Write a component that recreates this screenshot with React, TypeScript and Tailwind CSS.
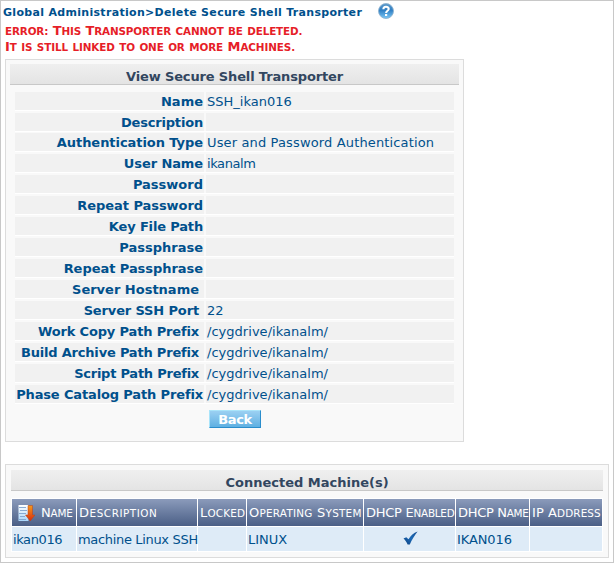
import React from "react";

const fields: [string, string, string, string][] = [
  ["Name", "SSH_ikan016", "pr-px", ""],
  ["Description", "", "pr-px tracking-[-0.18px]", ""],
  ["Authentication Type", "User and Password Authentication", "pr-px tracking-[-0.06px]", "tracking-[0.14px]"],
  ["User Name", "ikanalm", "pr-px tracking-[-0.1px]", "tracking-[-0.4px]"],
  ["Password", "", "pr-px", ""],
  ["Repeat Password", "", "pr-px tracking-[-0.06px]", ""],
  ["Key File Path", "", "pr-px tracking-[-0.16px]", ""],
  ["Passphrase", "", "pr-px", ""],
  ["Repeat Passphrase", "", "pr-px tracking-[-0.05px]", ""],
  ["Server Hostname", "", "pr-[5px]", ""],
  ["Server SSH Port", "22", "pr-[5px] tracking-[-0.14px]", ""],
  ["Work Copy Path Prefix", "/cygdrive/ikanalm/", "pr-[5px] tracking-[-0.16px]", "tracking-[0.03px]"],
  ["Build Archive Path Prefix", "/cygdrive/ikanalm/", "pr-[5px] tracking-[-0.19px]", "tracking-[0.03px]"],
  ["Script Path Prefix", "/cygdrive/ikanalm/", "pr-[5px] tracking-[-0.24px]", "tracking-[0.03px]"],
  ["Phase Catalog Path Prefix", "/cygdrive/ikanalm/", "pr-px tracking-[-0.14px]", "tracking-[0.03px]"],
];

function HelpIcon() {
  return (
    <svg className="mb-0.5 ml-4 size-4" viewBox="0 0 16 16">
      <defs>
        <linearGradient id="help" x1="0" y1="0" x2="0" y2="1">
          <stop offset="0" stopColor="#5f9ccb" />
          <stop offset="0.45" stopColor="#2f7fc4" />
          <stop offset="1" stopColor="#7cc8f6" />
        </linearGradient>
      </defs>
      <circle cx="8" cy="8" r="7.5" fill="url(#help)" stroke="#8fb2cf" strokeWidth="0.9" />
      <path d="M5.4 6.2C5.4 3 10.7 3 10.7 6C10.7 7.8 8.1 7.8 8.1 9.9" fill="none" stroke="#fff" strokeWidth="2.1" />
      <rect x="7" y="11" width="2.2" height="2" fill="#fff" />
    </svg>
  );
}

function SortIcon() {
  return (
    <svg className="h-[18px] w-[17px] shrink-0" viewBox="0 0 17 18">
      <defs>
        <linearGradient id="page" x1="0" y1="0" x2="0" y2="1">
          <stop offset="0" stopColor="#fff" />
          <stop offset="1" stopColor="#a9d6fb" />
        </linearGradient>
        <linearGradient id="arrow" x1="0" y1="0" x2="0" y2="1">
          <stop offset="0" stopColor="#f59a1c" />
          <stop offset="1" stopColor="#d92b0c" />
        </linearGradient>
      </defs>
      <rect x="0.5" y="1" width="10" height="16" fill="url(#page)" />
      <path d="M1 3.5H8M2 6.5H9M1 9.5H8M2 12.5H7M1 15.5H8" stroke="#7fa3cd" strokeWidth="0.9" />
      <path d="M10 1.5H14.5V11H17L12.2 17L7.5 11H10Z" fill="url(#arrow)" stroke="#b8431a" strokeWidth="0.5" />
    </svg>
  );
}

function CheckIcon() {
  return (
    <svg className="mt-px h-[15px] w-[15px]" viewBox="0 0 15 15">
      <defs>
        <linearGradient id="check" x1="0" y1="1" x2="1" y2="0">
          <stop offset="0" stopColor="#0b3f80" />
          <stop offset="0.5" stopColor="#1c69b5" />
          <stop offset="1" stopColor="#174f92" />
        </linearGradient>
      </defs>
      <path d="M0.5 7.5L3.3 6.2L5.5 8.2C7.6 4.6 10.6 2 14.6 0.5C11.6 4.4 8.8 8.8 6.8 13.6H4.6C3.6 11.2 2.3 9.2 0.5 7.5Z" fill="url(#check)" />
    </svg>
  );
}

/* Words in capitals, with a taller initial where the word starts with a capital. */
function Caps({ text }: { text: string }) {
  return (
    <>
      {text.split(" ").map((word, i) => {
        const style =
          word === word.toUpperCase()
            ? "text-[13px]"
            : /^[A-Z]/.test(word)
              ? "text-[10.4px] uppercase first-letter:text-[13px]"
              : "text-[10.4px] uppercase";
        return (
          <React.Fragment key={i}>
            {i > 0 && " "}
            <span className={`inline-block leading-none ${style}`}>{word}</span>
          </React.Fragment>
        );
      })}
    </>
  );
}

function Th({ className = "", icon, text }: { className?: string; icon?: React.ReactNode; text: string }) {
  return (
    <div className={`flex h-[27px] items-center whitespace-nowrap bg-linear-to-b from-[#8b9bbb] to-[#4b5f86] text-white ${icon ? "gap-[6px] pl-[6px]" : "pl-[2px]"} ${className}`}>
      {icon}
      <span><Caps text={text} /></span>
    </div>
  );
}

function Td({ className = "", children }: { className?: string; children?: React.ReactNode }) {
  return <div className={`flex h-6 items-start whitespace-nowrap bg-[#deebf7] pl-px pt-[3px] ${className}`}>{children}</div>;
}

export default function App() {
  return (
    <div className="h-[563px] w-[614px] overflow-hidden border border-[#c8c8c8] bg-white font-['Verdana','DejaVu_Sans',sans-serif] text-[13px] leading-[19px] text-[#00508c]">
      <div className="flex h-[22px] items-center pl-[2px] text-[11px] font-bold">
        <span className="w-[359px] whitespace-nowrap pt-px tracking-[0.31px]">Global Administration&gt;Delete Secure Shell Transporter</span>
        <HelpIcon />
      </div>
      <div className="h-9 whitespace-nowrap pl-1 font-bold leading-4 text-[#e61e28]">
        <p className="h-4 tracking-[-0.14px]"><Caps text="error: This Transporter cannot be deleted." /></p>
        <p className="h-4 tracking-[-0.1px]"><Caps text="It is still linked to one or more Machines." /></p>
      </div>

      <section className="ml-1 h-[383px] w-[459px] border border-[#dcdcdc] bg-[#f9f9f9] p-1">
        <h2 className="h-[21px] border-b border-[#c8c8c8] bg-linear-to-b from-[#efefef] to-[#e4e4e4] pt-[3px] text-center font-bold tracking-[-0.14px] text-[#32465f]">
          View Secure Shell Transporter
        </h2>
        <div className="mt-[7px] flex flex-col px-[5px]">
          {fields.map(([label, value, labelStyle, valueStyle], i) => (
            <div key={label} className={`flex h-[19px] gap-[2px] border-b border-white ${i === 1 ? "mb-px" : "mb-[2px]"}`}>
              <div className={`w-[189px] whitespace-nowrap bg-[#f1f1f1] text-right font-bold ${labelStyle}`}>{label}</div>
              <div className={`flex-1 whitespace-nowrap bg-[#f1f1f1] pl-px ${valueStyle}`}>{value}</div>
            </div>
          ))}
        </div>
        <button className="ml-[199px] mt-1 block h-[18px] w-[52px] border border-t-[#a9e4fa] border-r-[#2a8dcc] border-b-[#2a8dcc] border-l-[#a9e4fa] bg-linear-to-b from-[#9bd0f2] to-[#5eb0e2] text-center font-bold leading-[17px] tracking-[-0.4px] text-white">
          Back
        </button>
      </section>

      <section className="ml-1 mt-[22px] h-[94px] w-[604px] border border-[#dcdcdc] bg-[#f9f9f9] p-[5px]">
        <h2 className="h-[21px] border-b border-[#c8c8c8] bg-linear-to-b from-[#efefef] to-[#e4e4e4] pt-[3px] text-center font-bold text-[#32465f]">
          Connected Machine(s)
        </h2>
        <div className="mt-[7px] grid grid-cols-[64px_120px_48px_116px_91px_73px_72px] gap-px bg-white p-px">
          <Th icon={<SortIcon />} text="Name" className="tracking-[-0.2px]" />
          <Th text="Description" className="tracking-[0.55px]" />
          <Th text="Locked" className="tracking-[0.2px]" />
          <Th text="Operating System" className="tracking-[0.25px]" />
          <Th text="DHCP Enabled" className="tracking-[-0.25px]" />
          <Th text="DHCP Name" className="tracking-[-0.3px]" />
          <Th text="IP Address" className="tracking-[0.1px]" />
          <Td className="tracking-[-0.4px]">ikan016</Td>
          <Td className="tracking-[-0.33px]">machine Linux SSH</Td>
          <Td />
          <Td>LINUX</Td>
          <Td className="justify-center"><CheckIcon /></Td>
          <Td className="tracking-[-0.1px]">IKAN016</Td>
          <Td />
        </div>
      </section>
    </div>
  );
}
